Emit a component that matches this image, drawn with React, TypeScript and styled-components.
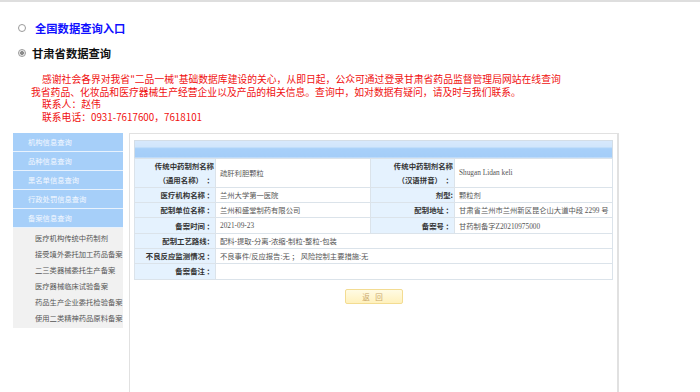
import React from "react";
import styled, { createGlobalStyle } from "styled-components";

const GlobalStyle = createGlobalStyle`
  html, body { margin: 0; padding: 0; background: #fff; }
  body { font-family: "Noto Sans CJK SC", "Noto Sans", sans-serif; }
  * { box-sizing: border-box; }
`;

const Page = styled.div`
  width: 700px;
  height: 392px;
  overflow: hidden;
  background: #fff;
`;

const TopBar = styled.div`
  height: 2px;
  background: #dedede;
`;

const Header = styled.div`
  padding: 17px 0 0 18px;
  display: flex;
  flex-direction: column;
  gap: 7px;
`;

const RadioRow = styled.label<{ $gap: number }>`
  display: flex;
  align-items: center;
  height: 18px;
  gap: ${(p) => p.$gap}px;
`;

const Radio = styled.span<{ $checked?: boolean }>`
  width: 8px;
  height: 8px;
  border-radius: 50%;
  border: 1px solid #9a9a9a;
  background: ${(p) =>
    p.$checked ? "radial-gradient(circle, #8a8a8a 0 1.6px, #d8d8d8 2px, #f4f4f4 3px)" : "#fff"};
  flex: none;
`;

const HeadText = styled.span<{ $blue?: boolean }>`
  font-size: 11.3px;
  font-weight: 700;
  color: ${(p) => (p.$blue ? "#1010ff" : "#111")};
  letter-spacing: 0;
`;

const Notice = styled.div`
  margin: 11px 0 0 31px;
  color: #f01010;
  font-size: 9.8px;
  line-height: 12.7px;
  white-space: nowrap;
`;

const NoticeLine = styled.div<{ $indent?: boolean }>`
  padding-left: ${(p) => (p.$indent ? 11 : 0)}px;
`;

const Content = styled.div`
  display: flex;
  gap: 6px;
  margin-top: 9px;
  padding-left: 13px;
  align-items: flex-start;
`;

const Sidebar = styled.div`
  width: 110px;
  display: flex;
  flex-direction: column;
`;

const NavItem = styled.div`
  height: 19px;
  background: #a6cff9;
  border-bottom: 1px solid #e8f2fd;
  color: #f4f8ff;
  font-size: 7.3px;
  display: flex;
  align-items: center;
  padding-left: 15px;
`;

const SubList = styled.div`
  background: #f1f1f1;
  padding: 2px 0 2px 0;
`;

const SubItem = styled.div`
  height: 16px;
  display: flex;
  align-items: center;
  padding-left: 22px;
  font-size: 7.3px;
  color: #555;
  white-space: nowrap;
`;

const MainPanel = styled.div`
  width: 490px;
  height: 280px;
  border: 1px solid #e1e1e1;
  border-right-width: 2px;
  padding: 6px 5px 0 5px;
  display: flex;
  flex-direction: column;
  align-items: center;
`;

const Table = styled.table`
  width: 478px;
  border-collapse: collapse;
  table-layout: fixed;
  border: 1px solid #d3dde6;
  font-family: "Liberation Serif", "Noto Sans CJK SC", serif;
`;

const HeadCell = styled.td`
  height: 18px;
  padding: 0;
  background: linear-gradient(#d7e9fc 0, #d0e5fb 40%, #a8d0f9 45%, #a4cdf8 100%);
`;

const Row = styled.tr<{ $tall?: boolean }>`
  height: ${(p) => (p.$tall ? 28 : 15.3)}px;
`;

const LabelCell = styled.td`
  background: #e5f2fe;
  border: 1px solid #dbe3ea;
  text-align: right;
  padding: 0 1px 0 0;
  font-family: "Noto Sans CJK SC", sans-serif;
  font-size: 7.4px;
  font-weight: 700;
  color: #333;
  line-height: 14px;
  white-space: nowrap;
`;

const ValueCell = styled.td`
  background: #fff;
  border: 1px solid #dbe3ea;
  padding: 0 0 0 4px;
  font-size: 7.3px;
  color: #555;
  white-space: nowrap;
  overflow: hidden;
`;

const ReturnButton = styled.button`
  margin-top: 9px;
  width: 58px;
  height: 15px;
  border: 1px solid #f3dc92;
  border-radius: 2px;
  background: linear-gradient(#fffbe4, #fff1bd);
  color: #caa96d;
  font-family: "Noto Sans CJK SC", sans-serif;
  font-size: 7.5px;
  padding: 0;
  letter-spacing: 2px;
`;

const navItems = ["机构信息查询", "品种信息查询", "黑名单信息查询", "行政处罚信息查询", "备案信息查询"];
const subItems = [
  "医疗机构传统中药制剂",
  "接受境外委托加工药品备案",
  "二三类器械委托生产备案",
  "医疗器械临床试验备案",
  "药品生产企业委托检验备案",
  "使用二类精神药品原料备案",
];

export default function App() {
  return (
    <Page>
      <GlobalStyle />
      <TopBar />
      <Header>
        <RadioRow $gap={9}>
          <Radio />
          <HeadText $blue>全国数据查询入口</HeadText>
        </RadioRow>
        <RadioRow $gap={6}>
          <Radio $checked />
          <HeadText>甘肃省数据查询</HeadText>
        </RadioRow>
      </Header>
      <Notice>
        <NoticeLine $indent>
          感谢社会各界对我省"二品一械"基础数据库建设的关心，从即日起，公众可通过登录甘肃省药品监督管理局网站在线查询
        </NoticeLine>
        <NoticeLine>
          我省药品、化妆品和医疗器械生产经营企业以及产品的相关信息。查询中，如对数据有疑问，请及时与我们联系。
        </NoticeLine>
        <NoticeLine $indent>联系人：赵伟</NoticeLine>
        <NoticeLine $indent>联系电话：0931-7617600，7618101</NoticeLine>
      </Notice>
      <Content>
        <Sidebar>
          {navItems.map((n) => (
            <NavItem key={n}>{n}</NavItem>
          ))}
          <SubList>
            {subItems.map((s) => (
              <SubItem key={s}>{s}</SubItem>
            ))}
          </SubList>
        </Sidebar>
        <MainPanel>
          <Table>
            <colgroup>
              <col style={{ width: 81 }} />
              <col style={{ width: 155 }} />
              <col style={{ width: 84 }} />
              <col style={{ width: 158 }} />
            </colgroup>
            <tbody>
              <tr>
                <HeadCell colSpan={4} />
              </tr>
              <Row $tall>
                <LabelCell>
                  传统中药制剂名称
                  <br />
                  （通用名称）　：
                </LabelCell>
                <ValueCell>疏肝利胆颗粒</ValueCell>
                <LabelCell>
                  传统中药制剂名称
                  <br />
                  （汉语拼音）　：
                </LabelCell>
                <ValueCell>Shugan Lidan keli</ValueCell>
              </Row>
              <Row>
                <LabelCell>医疗机构名称 ：</LabelCell>
                <ValueCell>兰州大学第一医院</ValueCell>
                <LabelCell>剂型:</LabelCell>
                <ValueCell>颗粒剂</ValueCell>
              </Row>
              <Row>
                <LabelCell>配制单位名称 ：</LabelCell>
                <ValueCell>兰州和盛堂制药有限公司</ValueCell>
                <LabelCell>配制地址 ：</LabelCell>
                <ValueCell>甘肃省兰州市兰州新区昆仑山大道中段 2299 号</ValueCell>
              </Row>
              <Row>
                <LabelCell>备案时间 ：</LabelCell>
                <ValueCell>2021-09-23</ValueCell>
                <LabelCell>备案号 ：</LabelCell>
                <ValueCell>甘药制备字Z20210975000</ValueCell>
              </Row>
              <Row>
                <LabelCell>配制工艺路线：</LabelCell>
                <ValueCell colSpan={3}>配料-提取-分离-浓缩-制粒-整粒-包装</ValueCell>
              </Row>
              <Row>
                <LabelCell>不良反应监测情况 ：</LabelCell>
                <ValueCell colSpan={3}>不良事件/反应报告:无 ； 风险控制主要措施:无</ValueCell>
              </Row>
              <Row>
                <LabelCell>备案备注 ：</LabelCell>
                <ValueCell colSpan={3} />
              </Row>
            </tbody>
          </Table>
          <ReturnButton>返 回</ReturnButton>
        </MainPanel>
      </Content>
    </Page>
  );
}
